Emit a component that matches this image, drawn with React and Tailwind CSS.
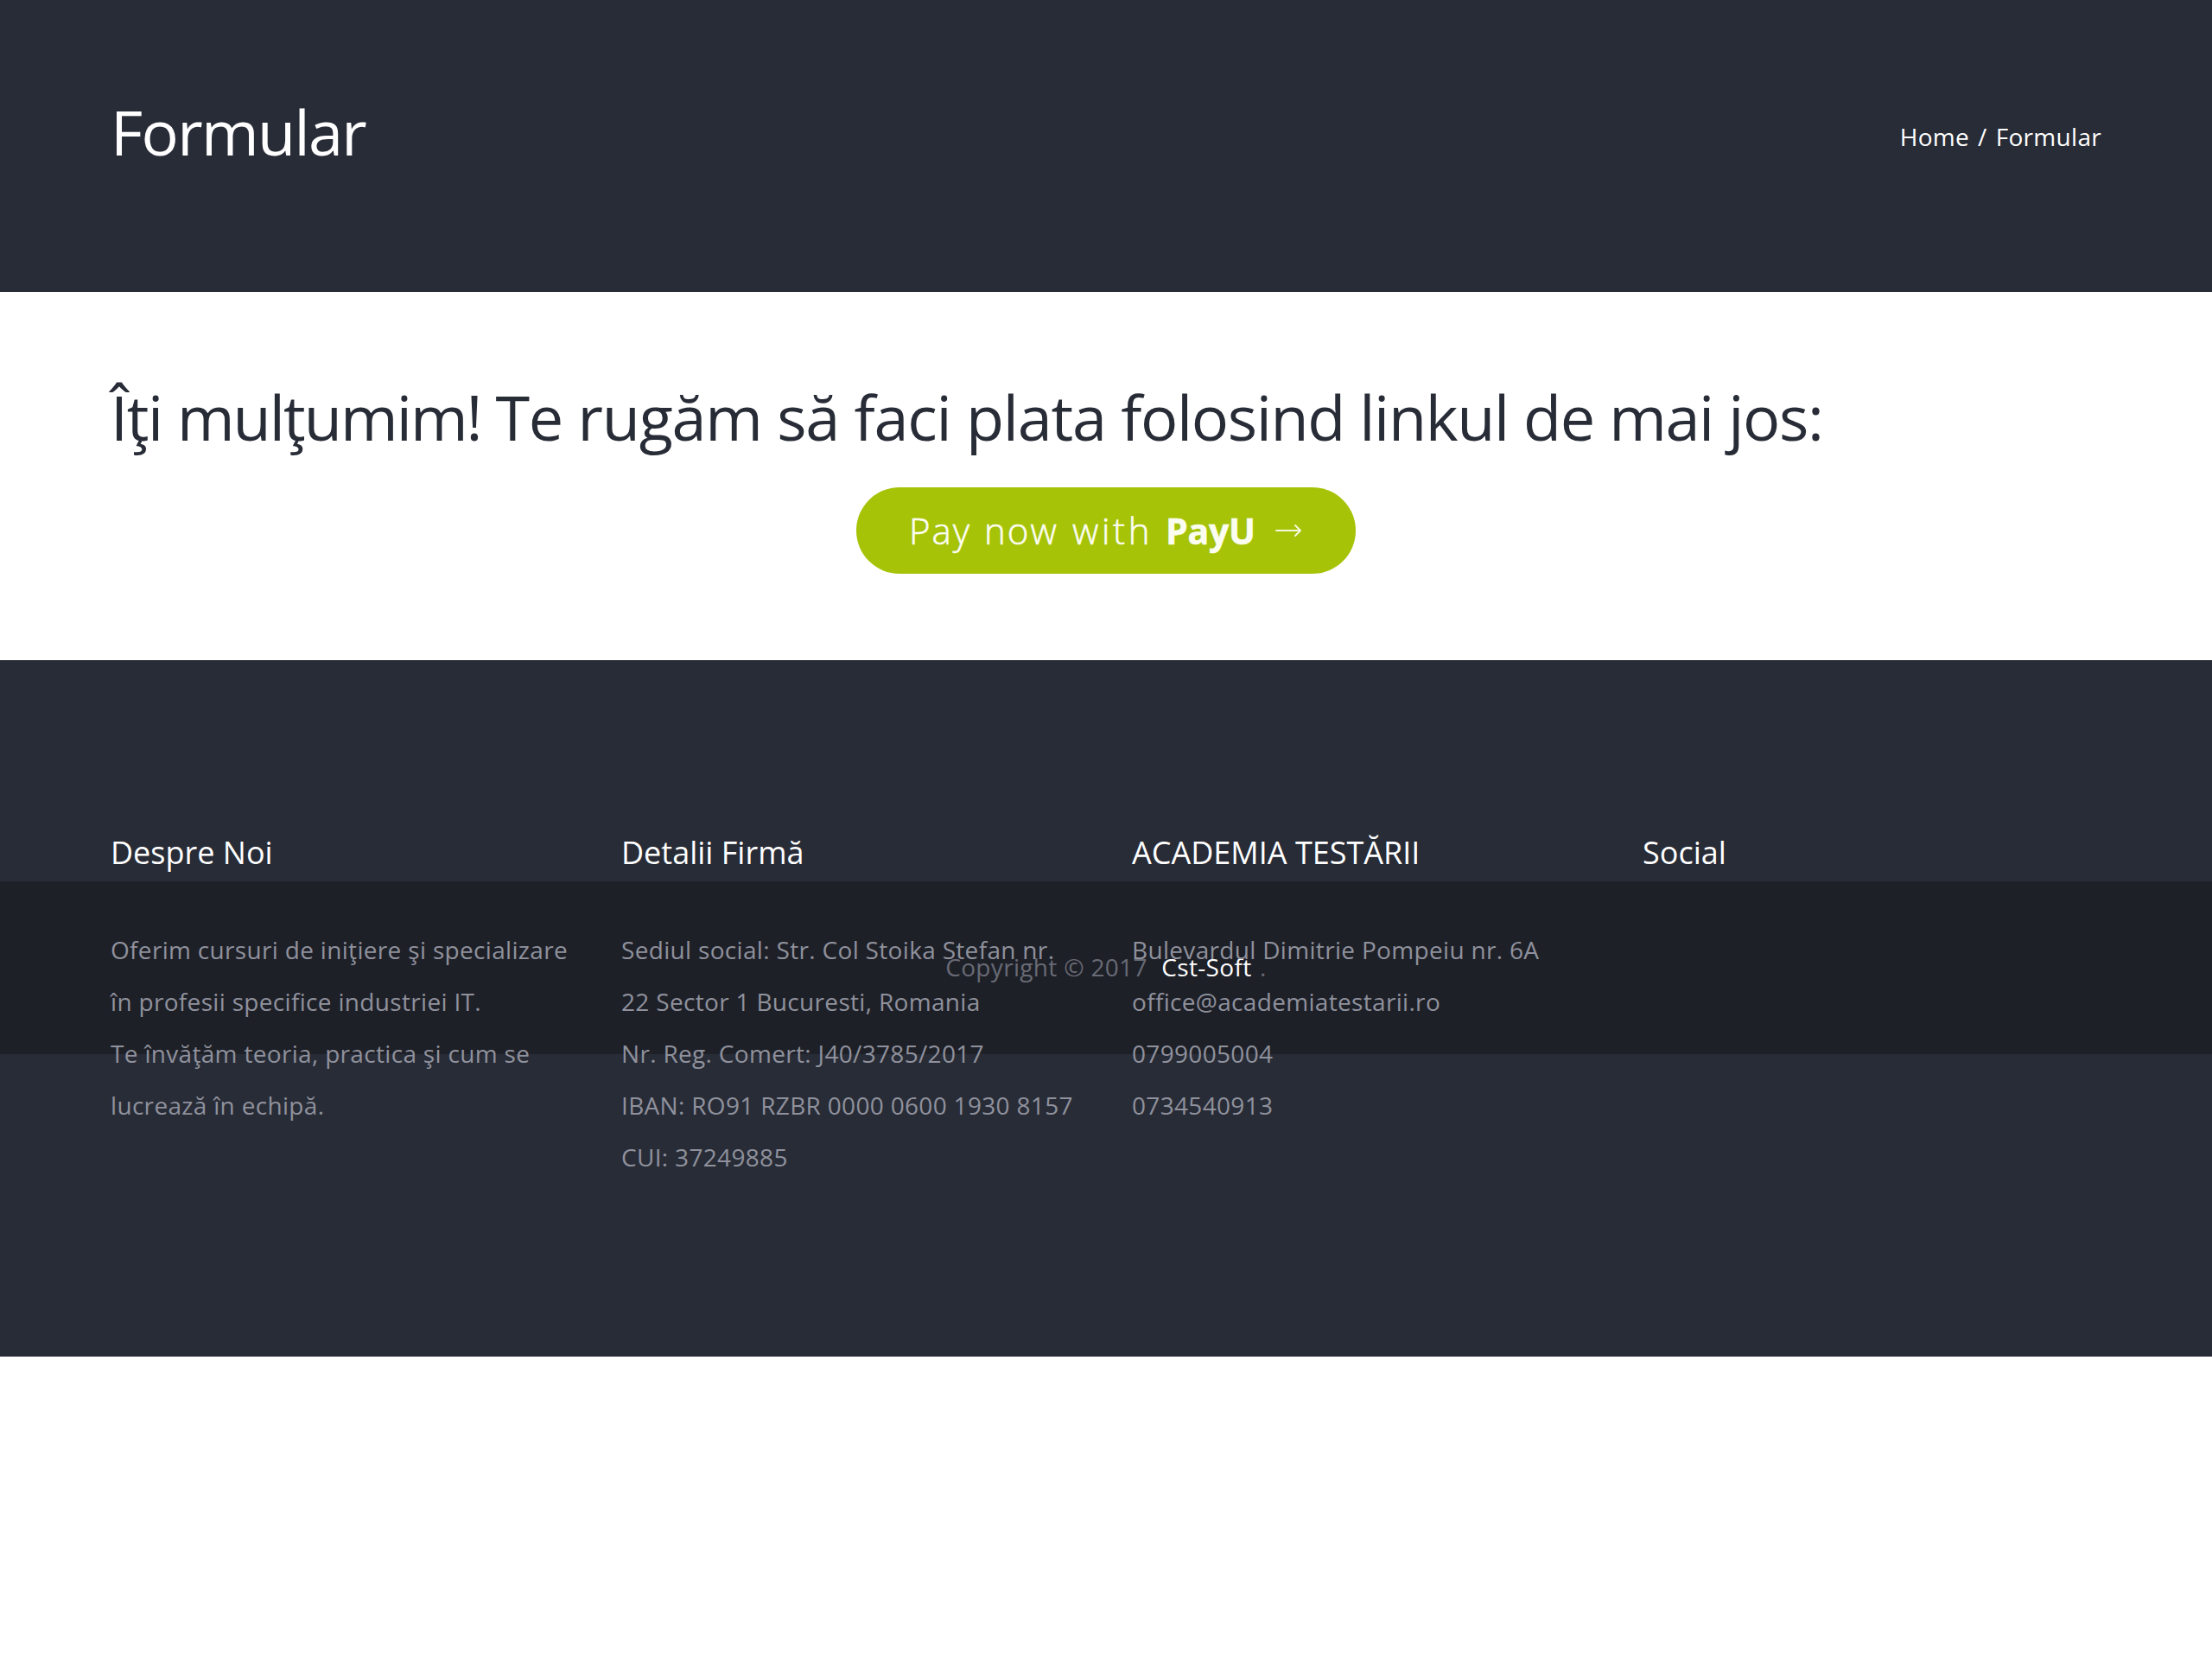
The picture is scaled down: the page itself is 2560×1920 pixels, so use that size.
const columns = [
  {
    title: 'Despre Noi',
    lines: ['Oferim cursuri de iniţiere şi specializare', 'în profesii specifice industriei IT.', 'Te învăţăm teoria, practica şi cum se', 'lucrează în echipă.'],
  },
  {
    title: 'Detalii Firmă',
    lines: ['Sediul social: Str. Col Stoika Stefan nr.', '22 Sector 1 Bucuresti, Romania', 'Nr. Reg. Comert: J40/3785/2017', 'IBAN: RO91 RZBR 0000 0600 1930 8157', 'CUI: 37249885'],
  },
  {
    title: 'ACADEMIA TESTĂRII',
    lines: ['Bulevardul Dimitrie Pompeiu nr. 6A', 'office@academiatestarii.ro', '0799005004', '0734540913'],
  },
  { title: 'Social', lines: [] },
];

export default function App() {
  return (
    <div className="min-h-[1920px] w-full bg-white font-['Open_Sans',sans-serif] text-[28px] leading-[60px]">
      <header className="flex h-[338px] items-start justify-between bg-[#282c37] px-32 text-white">
        <h1 className="mt-[104px] text-[72px] leading-[96px] tracking-[-1.65px]">Formular</h1>
        <nav className="mt-[128px] flex gap-[10px] tracking-[0.3px]">
          <a>Home</a>
          <span>/</span>
          <span>Formular</span>
        </nav>
      </header>

      <main className="flex h-[426px] flex-col px-32 pt-24">
        <h2 className="text-[72px] leading-[96px] tracking-[-1.37px] text-[#282c37]">
          <span className="tracking-[-1.44px]">Îţi </span>
          <span className="tracking-[-1.95px]">mulţumim! </span>
          <span className="tracking-[-1.23px]">Te rugăm să faci plata </span>
          folosind linkul de mai jos:
        </h2>
        <a className="mt-[34px] flex h-[100px] w-[578px] items-center self-center rounded-[50px] bg-[#a6c307] pl-[61px] text-[42px] font-light text-[#fbfdf0] [-webkit-text-stroke:0.6px_#fbfdf0]">
          <span className="w-[87px] tracking-[2px]">Pay</span>
          <span className="w-[102px] tracking-[2px]">now</span>
          <span className="w-[108px] tracking-[3.6px]">with</span>
          <b className="w-[126px] text-[41px] font-bold tracking-[-0.3px]">PayU</b>
          <svg className="shrink-0" width="32" height="18" viewBox="0 0 32 18" fill="none" stroke="#f4f8dd" strokeWidth="2" strokeLinecap="round" strokeLinejoin="round">
            <path d="M2 9H30M24 3L30 9L24 15" />
          </svg>
        </a>
      </main>

      <footer className="relative isolate h-[806px] bg-[#282c37] px-32 pt-[193px]">
        <div className="absolute inset-x-0 top-[256px] -z-10 flex h-[200px] items-start justify-center bg-[#1e2028] pt-[69px] text-[#686a74]">
          <p className="whitespace-pre tracking-[0.32px]">
            Copyright © 2017 <a className="ml-[9px] mr-0.5 text-white">Cst-Soft</a> .
          </p>
        </div>
        <div className="grid grid-cols-4 gap-x-[60px]">
          {columns.map((c) => (
            <section key={c.title}>
              <h3 className="mb-[52px] text-[36px] leading-[60px] text-white">{c.title}</h3>
              {c.lines.map((text) => (
                <p key={text} className="whitespace-nowrap tracking-[0.32px] text-[#8f919c]">{text}</p>
              ))}
            </section>
          ))}
        </div>
      </footer>
    </div>
  );
}
